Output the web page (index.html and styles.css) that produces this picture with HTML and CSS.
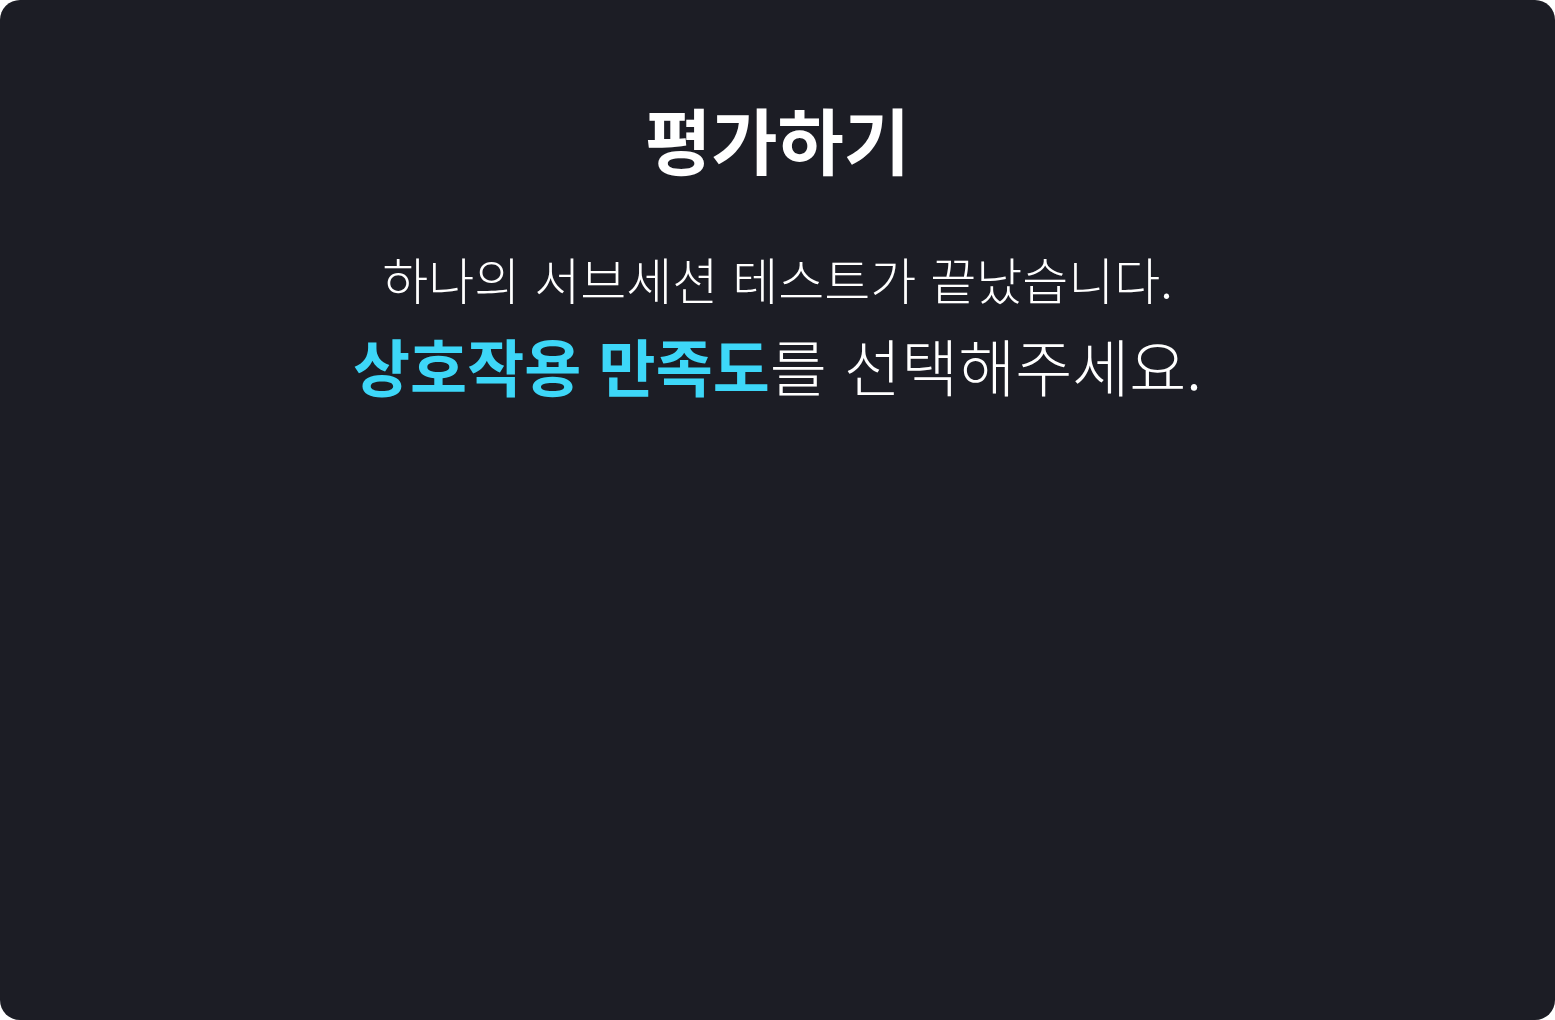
FILE: index.html
```html
<!DOCTYPE html>
<html lang="ko">
<head>
<meta charset="utf-8">
<link rel="stylesheet" href="styles.css">
</head>
<body>
<main class="panel">
  <h1 class="title">평가하기</h1>
  <p class="sub">하나의 서브세션 테스트가 끝났습니다.</p>
  <p class="prompt"><strong class="accent">상호작용 만족도</strong>를 선택해주세요.</p>
</main>
</body>
</html>
```

FILE: styles.css
```css
html, body {
  margin: 0;
  padding: 0;
  background: #ffffff;
}
body {
  width: 1555px;
  height: 1020px;
  font-family: "Noto Sans CJK KR", "Noto Sans", sans-serif;
}
.panel {
  box-sizing: border-box;
  width: 1555px;
  height: 1020px;
  background: #1c1d25;
  border-radius: 20px;
  display: flex;
  flex-direction: column;
  align-items: center;
  padding-top: 95px;
  color: #ffffff;
}
.title {
  margin: 0;
  font-size: 72px;
  font-weight: 700;
  line-height: 1.2;
}
.sub {
  margin: 67px 0 0;
  font-size: 50px;
  font-weight: 300;
  line-height: 1.2;
}
.prompt {
  margin: 20px 0 0;
  font-size: 62px;
  font-weight: 300;
  line-height: 1.2;
}
.accent {
  color: #3dd7f8;
  font-weight: 700;
}
```
